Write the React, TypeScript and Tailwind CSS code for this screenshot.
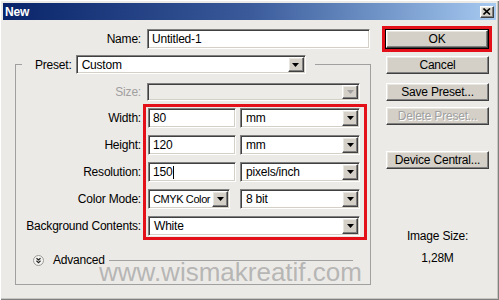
import React from 'react';

const sunken =
  'border border-t-[#808080] border-l-[#808080] border-b-white border-r-white shadow-[inset_1px_1px_0_#404040,inset_-1px_-1px_0_#d4d0c8]';
const raised =
  'border border-t-white border-l-white border-b-[#404040] border-r-[#404040] shadow-[inset_-1px_-1px_0_#808080,inset_1px_1px_0_#e8e6e0]';

const Arrow = ({ disabled }: { disabled?: boolean }) => (
  <div className={`w-[16px] h-full shrink-0 flex items-center justify-center bg-[#d4d0c8] ${raised}`}>
    <svg width="7" height="4" viewBox="0 0 7 4">
      <path d="M0 0h7L3.5 4z" fill={disabled ? '#a0a0a0' : '#000'} />
    </svg>
  </div>
);

const Field = ({ value, w, h = 20, caret }: { value: string; w: number; h?: number; caret?: boolean }) => (
  <div className={`flex items-center bg-white pl-[4px] ${sunken}`} style={{ width: w, height: h }}>
    <span>{value}</span>
    {caret && <span className="w-px h-[13px] bg-black ml-px" />}
  </div>
);

const Select = ({
  value,
  w,
  h = 20,
  disabled,
  textClass = 'pl-[4px]',
}: {
  value: string;
  w: number;
  h?: number;
  disabled?: boolean;
  textClass?: string;
}) => (
  <div
    className={`flex items-stretch p-[1px] ${sunken} ${disabled ? 'bg-[#ecebe8]' : 'bg-white'}`}
    style={{ width: w, height: h }}
  >
    <span className={`flex-1 flex items-center overflow-hidden whitespace-nowrap ${textClass}`}>{value}</span>
    <Arrow disabled={disabled} />
  </div>
);

const Button = ({ label, disabled, className = '' }: { label: string; disabled?: boolean; className?: string }) => (
  <div
    className={`ml-[4px] w-[103px] h-[18px] flex items-center justify-center bg-[#d4d0c8] ${raised} ${className} ${
      disabled ? 'text-[#a0a0a0] [text-shadow:1px_1px_0_#fff]' : 'text-black'
    }`}
  >
    {label}
  </div>
);

const rows = ['Width:', 'Height:', 'Resolution:', 'Color Mode:', 'Background Contents:'];

export default function App() {
  return (
    <div className="relative w-[499px] h-[300px] overflow-hidden bg-[#eceae6] text-[12px] leading-[14px] tracking-[-0.2px] text-black font-['Liberation_Sans',Arial,sans-serif] shadow-[inset_1px_1px_0_#fff,inset_-1px_-1px_0_#808080,inset_-2px_-2px_0_#c8c6c0]">
      {/* title bar */}
      <div className="mx-[3px] mt-[3px] h-[17px] flex items-center justify-between pl-[2px] pr-[2px] bg-gradient-to-r from-[#0a246a] via-[#3a5a9a] to-[#a6caf0]">
        <span className="text-white font-bold">New</span>
        <div className={`w-[14px] h-[12px] flex items-center justify-center bg-[#d4d0c8] ${raised}`}>
          <svg width="8" height="7" viewBox="0 0 8 7">
            <path d="M0.5 0.5L7 6.5M7 0.5L0.5 6.5" stroke="#000" strokeWidth="1.6" />
          </svg>
        </div>
      </div>

      <div className="flex">
        {/* left column */}
        <div className="w-[375px] flex flex-col">
          <div className="mt-[9px] h-[20px] flex items-center">
            <span className="w-[141px] text-right">Name:</span>
            <div className="ml-[6px]">
              <Field value="Untitled-1" w={223} />
            </div>
          </div>

          <fieldset className="mt-[6px] ml-[15px] w-[356px] border border-[#a0a0a0] pb-[17px]">
            <legend className="ml-[6px] pl-[13px] pr-[9px]">
              <div className="flex items-center">
                <span>Preset:</span>
                <div className="ml-[4px]">
                  <Select value="Custom" w={230} h={19} />
                </div>
              </div>
            </legend>

            <div className="mt-[9px] h-[18px] flex items-center">
              <span className="w-[125px] text-right text-[#a0a0a0]">Size:</span>
              <div className="ml-[6px]">
                <Select value="" w={213} h={18} disabled />
              </div>
            </div>

            <div className="mt-[3px] flex">
              <div className="w-[127px] pt-[4px] pr-[2px] flex flex-col gap-[7px]">
                {rows.map((r) => (
                  <div key={r} className="h-[20px] flex items-center justify-end whitespace-nowrap">
                    {r}
                  </div>
                ))}
              </div>
              <div className="w-[224px] border-[3px] border-[#e3101a] py-[1px] pl-[2px] flex flex-col gap-[7px]">
                <div className="flex gap-[4px]">
                  <Field value="80" w={88} />
                  <Select value="mm" w={120} />
                </div>
                <div className="flex gap-[4px]">
                  <Field value="120" w={88} />
                  <Select value="mm" w={120} />
                </div>
                <div className="flex gap-[4px]">
                  <Field value="150" w={88} caret />
                  <Select value="pixels/inch" w={120} />
                </div>
                <div className="flex gap-[10px]">
                  <Select value="CMYK Color" w={82} textClass="pl-[3px] text-[11px] tracking-[-0.4px]" />
                  <Select value="8 bit" w={120} />
                </div>
                <Select value="White" w={212} />
              </div>
            </div>

            <div className="mt-[13px] h-[14px] flex items-center pl-[17px] pr-[17px]">
              <svg width="11" height="11" viewBox="0 0 11 11">
                <circle cx="5.5" cy="5.5" r="5" fill="#f4f3f0" stroke="#9a9a9a" />
                <path d="M3.5 3.2L5.5 5L7.5 3.2M3.5 5.8L5.5 7.6L7.5 5.8" fill="none" stroke="#222" strokeWidth="1.2" />
              </svg>
              <span className="ml-[9px]">Advanced</span>
              <div className="ml-[4px] flex-1 h-px bg-[#a0a0a0]" />
            </div>
          </fieldset>
        </div>

        {/* right column */}
        <div className="flex flex-col pl-[7px]">
          <div className="mt-[6px] w-[110px] h-[26px] border-[3px] border-[#e3101a]">
            <div className="w-full h-full border border-black">
              <div className={`w-full h-full flex items-center justify-center bg-[#d4d0c8] ${raised}`}>OK</div>
            </div>
          </div>
          <Button label="Cancel" className="mt-[4px]" />
          <Button label="Save Preset..." className="mt-[9px]" />
          <Button label="Delete Preset..." disabled className="mt-[6px]" />
          <Button label="Device Central..." className="mt-[26px]" />
          <div className="ml-[4px] w-[103px] mt-[60px] text-center">Image Size:</div>
          <div className="ml-[4px] w-[103px] mt-[8px] text-center">1,28M</div>
        </div>
      </div>

      <div className="absolute left-[99px] top-[259px] text-[26px] leading-[26px] tracking-normal text-[#a8a8a8]/80 whitespace-nowrap pointer-events-none">
        www.wismakreatif.com
      </div>
    </div>
  );
}
